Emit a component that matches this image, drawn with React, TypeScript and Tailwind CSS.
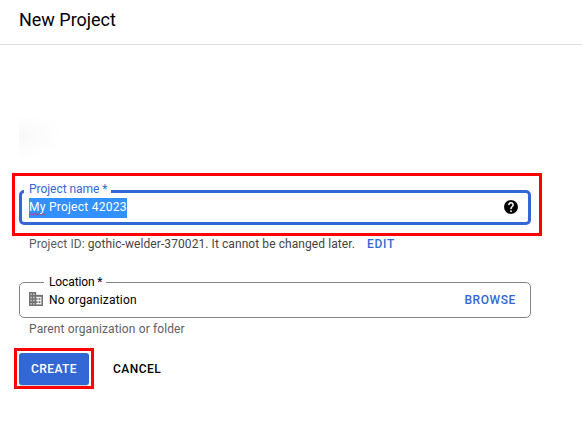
import React from "react";

function HelpIcon() {
  return (
    <svg viewBox="2 2 20 20" className="relative -top-px h-[14px] w-[14px] shrink-0" fill="#000">
      <path d="M12 2C6.48 2 2 6.48 2 12s4.48 10 10 10 10-4.48 10-10S17.52 2 12 2zm1 17h-2v-2h2v2zm2.07-7.75l-.9.92C13.45 12.9 13 13.5 13 15h-2v-.5c0-1.1.45-2.1 1.17-2.83l1.24-1.26c.37-.36.59-.86.59-1.41 0-1.1-.9-2-2-2s-2 .9-2 2H8c0-2.21 1.79-4 4-4s4 1.79 4 4c0 .88-.36 1.68-.93 2.25z" stroke="#fff" strokeWidth=".3" />
    </svg>
  );
}

function BuildingIcon() {
  return (
    <svg viewBox="2 3 20 18" preserveAspectRatio="none" className="relative -top-px h-[14px] w-[14px] shrink-0" fill="#757575" stroke="#757575" strokeWidth=".5">
      <path d="M12 7V3H2v18h20V7H12zM6 19H4v-2h2v2zm0-4H4v-2h2v2zm0-4H4V9h2v2zm0-4H4V5h2v2zm4 12H8v-2h2v2zm0-4H8v-2h2v2zm0-4H8V9h2v2zm0-4H8V5h2v2zm10 12h-8v-2h2v-2h-2v-2h2v-2h-2V9h8v10zm-2-8h-2v2h2v-2zm0 4h-2v2h2v-2z" />
    </svg>
  );
}

export default function App() {
  return (
    <div className="flex h-[421px] w-[582px] flex-col overflow-hidden bg-white font-[Roboto,sans-serif] text-[12px] whitespace-nowrap text-black">
      <header className="flex h-[45px] shrink-0 items-start border-b border-[#e0e0e0] pt-[9px] pl-[19px]">
        <h1 className="text-[18px] leading-[22px] tracking-[-0.02px]">New Project</h1>
      </header>

      <main className="flex flex-col items-start">
        <div className="mt-[73px] ml-[19px] h-[50px] w-[48px] bg-[radial-gradient(ellipse_44px_24px_at_0px_18px,#f8f8f8_0%,#fcfcfc_50%,#ffffff_100%)]" />

        <section className="mt-[5px] ml-[12px] h-[63px] w-[530px] border-[3px] border-[#ff0000] pt-[14px] pl-[4px]">
          <div className="relative flex h-[35px] w-[512px] items-center justify-between rounded-[5px] border-[3px] border-[#3367d6] pr-[10px] pl-[7px]">
            <label className="absolute top-[-11px] left-[2px] h-[14px] w-[87px] bg-white pl-[5px] leading-[14px] tracking-[-0.04px] text-[#3367d6]">
              Project name *
            </label>
            <span className="relative h-[20px] w-[98px] bg-[#3390ff] text-[12px] leading-[18px] tracking-[0.25px] text-white">
              My Project 42023
              <svg className="absolute top-[15px] left-0 h-[3px] w-[17px]" viewBox="0 0 17 3" fill="none" stroke="#d93070">
                <path d="M0 2L2 .5L4 2L6 .5L8 2L10 .5L12 2L14 .5L16 2" />
              </svg>
            </span>
            <HelpIcon />
          </div>
        </section>

        <div className="mt-[1px] ml-[29px] flex h-[14px] items-center leading-[14px]">
          <p className="w-[338px] tracking-[0.08px] text-[#5a5a5a]">
            Project ID: <span className="text-[#444]">gothic-welder-370021. It cannot be changed later.</span>
          </p>
          <button className="font-medium tracking-[0.7px] text-[#3367d6]">EDIT</button>
        </div>

        <div className="relative mt-[31px] ml-[19px] flex h-[36px] w-[512px] items-center rounded-[5px] border border-[#80868b] pr-[14px] pl-[9px]">
          <label className="absolute top-[-9px] left-[24px] h-[16px] w-[62px] bg-white pl-[5px] leading-[16px] tracking-[-0.12px]">
            Location *
          </label>
          <BuildingIcon />
          <span className="ml-[6px] flex-1 tracking-[0.2px]">No organization</span>
          <button className="font-medium tracking-[0.6px] text-[#3367d6]">BROWSE</button>
        </div>
        <p className="mt-[4px] ml-[29px] leading-[14px] tracking-[0.12px] text-[#616161]">Parent organization or folder</p>

        <div className="mt-[12px] ml-[14px] flex items-center">
          <div className="h-[41px] w-[80px] border-[3px] border-[#ff0000] pt-[2px] pl-[2px]">
            <button className="flex h-[32px] w-[70px] items-center justify-center rounded-[3px] bg-[#3367d6] font-medium tracking-[0.45px] text-white shadow-[0_1px_1px_#99999980]">
              CREATE
            </button>
          </div>
          <button className="ml-[19px] font-medium tracking-[0.45px]">CANCEL</button>
        </div>
      </main>
    </div>
  );
}
